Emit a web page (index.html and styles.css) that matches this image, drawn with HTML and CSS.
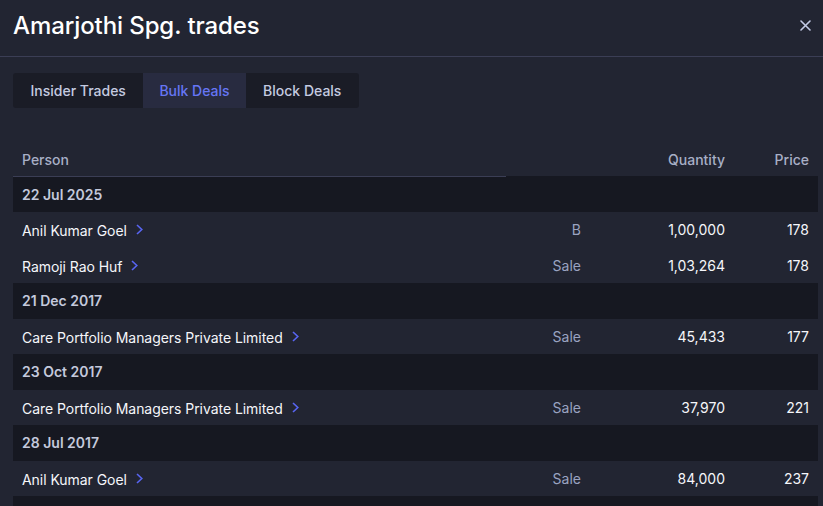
FILE: index.html
```html
<!DOCTYPE html>
<html>
<head>
<meta charset="utf-8">
<link rel="stylesheet" href="styles.css">
</head>
<body>
<div class="modal">
  <header class="modal-head">
    <h1 class="title">Amarjothi Spg. trades</h1>
    <button class="close" aria-label="Close">
      <svg width="11" height="11" viewBox="0 0 11 11"><path d="M1 1L10 10M10 1L1 10" stroke="#c3cbe6" stroke-width="1.6" stroke-linecap="round"/></svg>
    </button>
  </header>
  <div class="body">
    <div class="tabs">
      <div class="tab">Insider Trades</div>
      <div class="tab active">Bulk Deals</div>
      <div class="tab">Block Deals</div>
    </div>
    <table class="deals">
      <colgroup>
        <col class="c-person"><col class="c-side"><col class="c-qty"><col class="c-price">
      </colgroup>
      <thead>
        <tr><th class="th-person">Person</th><th></th><th class="num">Quantity</th><th class="num">Price</th></tr>
      </thead>
      <tbody>
        <tr class="date"><td colspan="4">22 Jul 2025</td></tr>
        <tr class="row"><td><span class="name">Anil Kumar Goel</span><svg class="chev" width="7" height="11" viewBox="0 0 7 11"><path d="M1 1L5.8 5.5L1 10" fill="none" stroke="#5865f2" stroke-width="1.6"/></svg></td><td class="side">B</td><td class="num">1,00,000</td><td class="num">178</td></tr>
        <tr class="row"><td><span class="name">Ramoji Rao Huf</span><svg class="chev" width="7" height="11" viewBox="0 0 7 11"><path d="M1 1L5.8 5.5L1 10" fill="none" stroke="#5865f2" stroke-width="1.6"/></svg></td><td class="side">Sale</td><td class="num">1,03,264</td><td class="num">178</td></tr>
        <tr class="date"><td colspan="4">21 Dec 2017</td></tr>
        <tr class="row"><td><span class="name">Care Portfolio Managers Private Limited</span><svg class="chev" width="7" height="11" viewBox="0 0 7 11"><path d="M1 1L5.8 5.5L1 10" fill="none" stroke="#5865f2" stroke-width="1.6"/></svg></td><td class="side">Sale</td><td class="num">45,433</td><td class="num">177</td></tr>
        <tr class="date"><td colspan="4">23 Oct 2017</td></tr>
        <tr class="row"><td><span class="name">Care Portfolio Managers Private Limited</span><svg class="chev" width="7" height="11" viewBox="0 0 7 11"><path d="M1 1L5.8 5.5L1 10" fill="none" stroke="#5865f2" stroke-width="1.6"/></svg></td><td class="side">Sale</td><td class="num">37,970</td><td class="num">221</td></tr>
        <tr class="date"><td colspan="4">28 Jul 2017</td></tr>
        <tr class="row"><td><span class="name">Anil Kumar Goel</span><svg class="chev" width="7" height="11" viewBox="0 0 7 11"><path d="M1 1L5.8 5.5L1 10" fill="none" stroke="#5865f2" stroke-width="1.6"/></svg></td><td class="side">Sale</td><td class="num">84,000</td><td class="num">237</td></tr>
        <tr class="date"><td colspan="4">&nbsp;</td></tr>
      </tbody>
    </table>
  </div>
</div>
</body>
</html>
```

FILE: styles.css
```css
html, body {
  margin: 0;
  padding: 0;
  background: #222532;
  height: 100%;
  overflow: hidden;
}
body {
  font-family: Inter, "Noto Sans", sans-serif;
  color: #f2f3f7;
}
.modal {
  width: 823px;
  height: 506px;
  overflow: hidden;
}
.modal-head {
  height: 57px;
  border-bottom: 1px solid #3b3e55;
  display: flex;
  align-items: center;
  justify-content: space-between;
  padding: 0 13px;
  box-sizing: border-box;
}
.title {
  margin: 0;
  font-size: 24px;
  font-weight: 500;
  color: #ffffff;
  letter-spacing: -0.1px;
  padding-bottom: 6px;
}
.close {
  background: none;
  border: 0;
  padding: 0;
  width: 11px;
  height: 11px;
  display: flex;
  margin-right: -1px;
  margin-bottom: 6px;
  cursor: pointer;
}
.body {
  padding: 16px 5px 0 13px;
}
.tabs {
  display: inline-flex;
  background: #1a1c26;
  border-radius: 3px;
  height: 35px;
}
.tab {
  display: flex;
  align-items: center;
  padding: 0 17.5px;
  font-size: 14px;
  font-weight: 500;
  color: #c5cbe0;
}
.tab.active {
  background: #282b40;
  color: #6676f5;
  padding: 0 16px;
}
.deals {
  margin-top: 35px;
  width: 805px;
  border-collapse: collapse;
  font-size: 14px;
}
.c-person { width: 493px; }
.c-side { width: 84px; }
.c-qty { width: 145px; }
.c-price { width: 83px; }
th {
  font-weight: 500;
  color: #a8afc6;
  text-align: left;
  height: 33px;
  padding: 0 9px;
  vertical-align: top;
  line-height: 18px;
  padding-top: 8px;
  box-sizing: border-box;
}
th.num:nth-child(3) { padding-right: 10px; }
.th-person {
  border-bottom: 1px solid #3b3e55;
}
th.num, td.num { text-align: right; }
td {
  padding: 0 9px;
}
td.num:nth-child(3) { padding-right: 10px; }
.date td {
  background: #161821;
  height: 35.5px;
  font-weight: 600;
  color: #c4c9dc;
}
.row td {
  height: 35.5px;
  background: #222532;
  color: #f5f6fa;
}
.row td.side {
  text-align: right;
  color: #9aa3c1;
}
.name {
  vertical-align: middle;
  letter-spacing: -0.05px;
}
.chev {
  vertical-align: middle;
  margin-left: 9px;
  position: relative;
  top: -1px;
}
```
